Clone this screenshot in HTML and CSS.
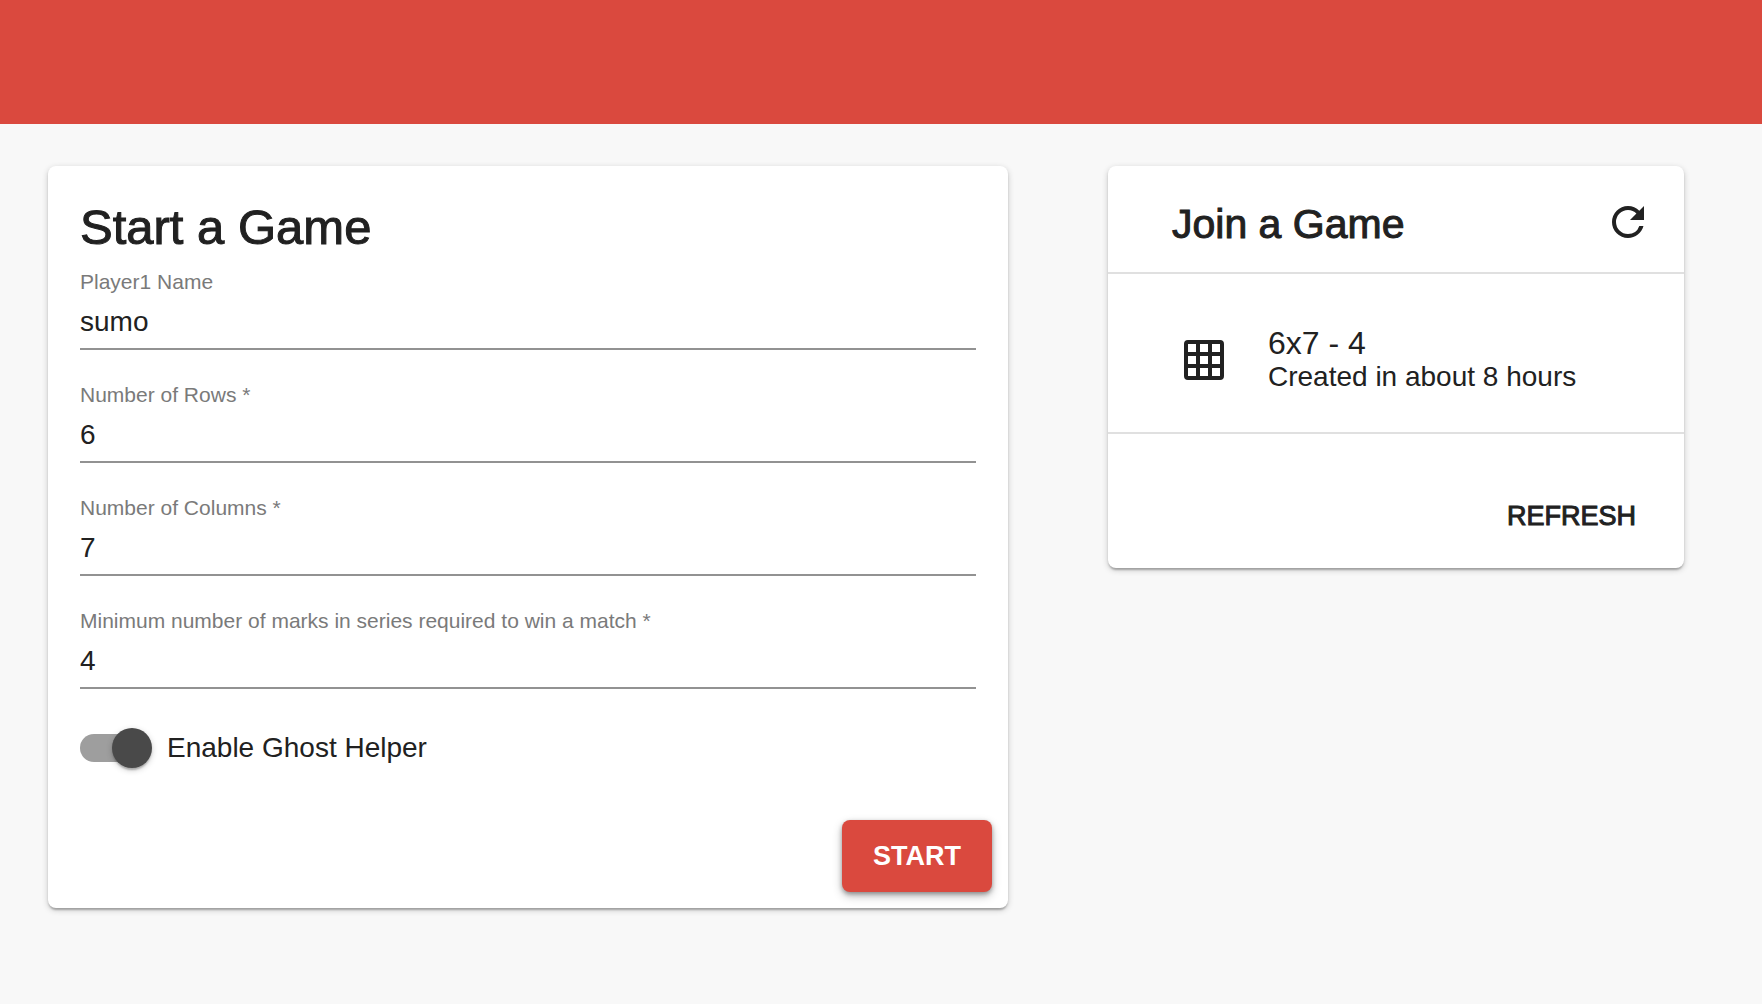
FILE: index.html
```html
<!DOCTYPE html>
<html lang="en">
<head>
<meta charset="utf-8">
<meta name="viewport" content="width=device-width, initial-scale=1">
<title>Start a Game</title>
<link rel="stylesheet" href="styles.css">
</head>
<body>
<header class="topbar"></header>
<main class="layout">
  <form class="card start">
    <h1 class="start-title">Start a Game</h1>
    <div class="fields">
      <div class="field">
        <label class="field-label" for="player">Player1 Name</label>
        <input class="field-input" id="player" type="text" value="sumo">
      </div>
      <div class="field">
        <label class="field-label" for="rows">Number of Rows *</label>
        <input class="field-input" id="rows" type="text" inputmode="numeric" value="6" required>
      </div>
      <div class="field">
        <label class="field-label" for="columns">Number of Columns *</label>
        <input class="field-input" id="columns" type="text" inputmode="numeric" value="7" required>
      </div>
      <div class="field">
        <label class="field-label" for="marks">Minimum number of marks in series required to win a match *</label>
        <input class="field-input" id="marks" type="text" inputmode="numeric" value="4" required>
      </div>
    </div>
    <label class="toggle">
      <input class="toggle-input" type="checkbox" checked>
      <span>Enable Ghost Helper</span>
    </label>
    <div class="actions">
      <button class="button button-primary" type="button">START</button>
    </div>
  </form>

  <section class="card join">
    <div class="join-header">
      <h2 class="join-title">Join a Game</h2>
      <button class="icon-button" type="button" aria-label="Refresh games">
        <svg class="icon" viewBox="0 0 24 24"><path d="M17.65 6.35C16.2 4.9 14.21 4 12 4a8 8 0 1 0 0 16c3.73 0 6.84-2.55 7.73-6h-2.08A5.99 5.99 0 0 1 12 18a6 6 0 1 1 0-12c1.66 0 3.14.69 4.22 1.78L13 11h7V4l-2.35 2.35z"/></svg>
      </button>
    </div>
    <ul class="games">
      <li class="game">
        <svg class="icon" viewBox="0 0 24 24" aria-hidden="true"><path d="M10 4v4h4V4h-4m6 0v4h4V4h-4m0 6v4h4v-4h-4m0 6v4h4v-4h-4m-2 4v-4h-4v4h4m-6 0v-4H4v4h4m0-6v-4H4v4h4m0-6V4H4v4h4m2 6h4v-4h-4v4M4 2h16a2 2 0 0 1 2 2v16a2 2 0 0 1-2 2H4a2 2 0 0 1-2-2V4a2 2 0 0 1 2-2z"/></svg>
        <div class="game-text">
          <h3 class="game-name">6x7 - 4</h3>
          <p class="game-age">Created in about 8 hours</p>
        </div>
      </li>
    </ul>
    <div class="actions join-actions">
      <button class="button" type="button">REFRESH</button>
    </div>
  </section>
</main>
</body>
</html>
```
FILE: styles.css
```css
* {
  box-sizing: border-box;
}

body {
  margin: 0;
  background: #f8f8f8;
  color: #212121;
  font-family: "Liberation Sans", Arial, sans-serif;
  font-size: 28px;
}

h1, h2, h3, p, ul {
  margin: 0;
  padding: 0;
  font-weight: 400;
}

.topbar {
  height: 124px;
  background: #da493e;
}

.layout {
  display: grid;
  grid-template-columns: 5fr 3fr;
  gap: 100px;
  align-items: start;
  padding: 42px 78px 42px 48px;
}

.card {
  background: #fff;
  border-radius: 8px;
  box-shadow: 0 2px 6px rgba(0, 0, 0, 0.2), 0 2px 2px rgba(0, 0, 0, 0.14), 0 4px 2px -2px rgba(0, 0, 0, 0.12);
}

/* Start a Game */

.start {
  padding-top: 32px;
}

.start-title {
  margin: 0 32px 12px;
  font-size: 49px;
  line-height: 58px;
  -webkit-text-stroke: 1px currentColor;
}

.fields {
  display: grid;
  gap: 31px;
  padding: 0 32px;
}

.field {
  display: grid;
  gap: 8px;
}

.field-label {
  color: #7a7a7a;
  font-size: 21px;
  line-height: 28px;
}

.field-input {
  width: 100%;
  height: 46px;
  padding: 0 0 8px;
  border: 0;
  border-bottom: 2px solid #929292;
  border-radius: 0;
  outline: 0;
  background: none;
  color: inherit;
  font: inherit;
}

.toggle {
  display: flex;
  align-items: center;
  gap: 15px;
  margin: 39px 32px 52px;
}

.toggle-input {
  position: relative;
  width: 72px;
  height: 40px;
  margin: 0;
  appearance: none;
}

.toggle-input::before,
.toggle-input::after {
  content: "";
  position: absolute;
}

.toggle-input::before {
  inset: 6px 4px 6px 0;
  border-radius: 14px;
  background: #9e9e9e;
}

.toggle-input::after {
  top: 0;
  left: 0;
  width: 40px;
  height: 40px;
  border-radius: 50%;
  background: #494949;
  box-shadow: 0 2px 6px rgba(0, 0, 0, 0.2), 0 2px 2px rgba(0, 0, 0, 0.14), 0 4px 2px -2px rgba(0, 0, 0, 0.12);
}

.toggle-input:checked::after {
  left: auto;
  right: 0;
}

.actions {
  display: flex;
  justify-content: flex-end;
  padding: 0 16px 16px;
}

.button {
  height: 72px;
  padding: 0 32px;
  border: 0;
  border-radius: 8px;
  background: none;
  color: inherit;
  font-family: inherit;
  font-size: 27px;
  -webkit-text-stroke: 1px currentColor;
}

.button-primary {
  padding: 0 31px;
  background: #da493e;
  color: #fff;
  font-weight: 700;
  -webkit-text-stroke: 0;
  box-shadow: 0 4px 10px rgba(0, 0, 0, 0.26), 0 2px 4px rgba(0, 0, 0, 0.3);
}

/* Join a Game */

.join-header {
  display: flex;
  align-items: center;
  justify-content: space-between;
  height: 108px;
  padding: 6px 32px 0 64px;
  border-bottom: 2px solid #e0e0e0;
}

.join-title {
  padding-top: 4px;
  font-size: 41px;
  line-height: 48px;
  -webkit-text-stroke: 1px currentColor;
}

.icon-button {
  display: flex;
  padding: 0;
  border: 0;
  background: none;
  color: inherit;
}

.icon {
  display: block;
  width: 48px;
  height: 48px;
  flex: none;
  fill: currentColor;
}

.games {
  list-style: none;
}

.game {
  display: flex;
  align-items: center;
  gap: 40px;
  height: 160px;
  padding: 14px 72px 0;
  border-bottom: 2px solid #e0e0e0;
}

.game-name {
  font-size: 32px;
  line-height: 34px;
}

.game-age {
  line-height: 34px;
}

.join-actions {
  padding-top: 46px;
}
```
